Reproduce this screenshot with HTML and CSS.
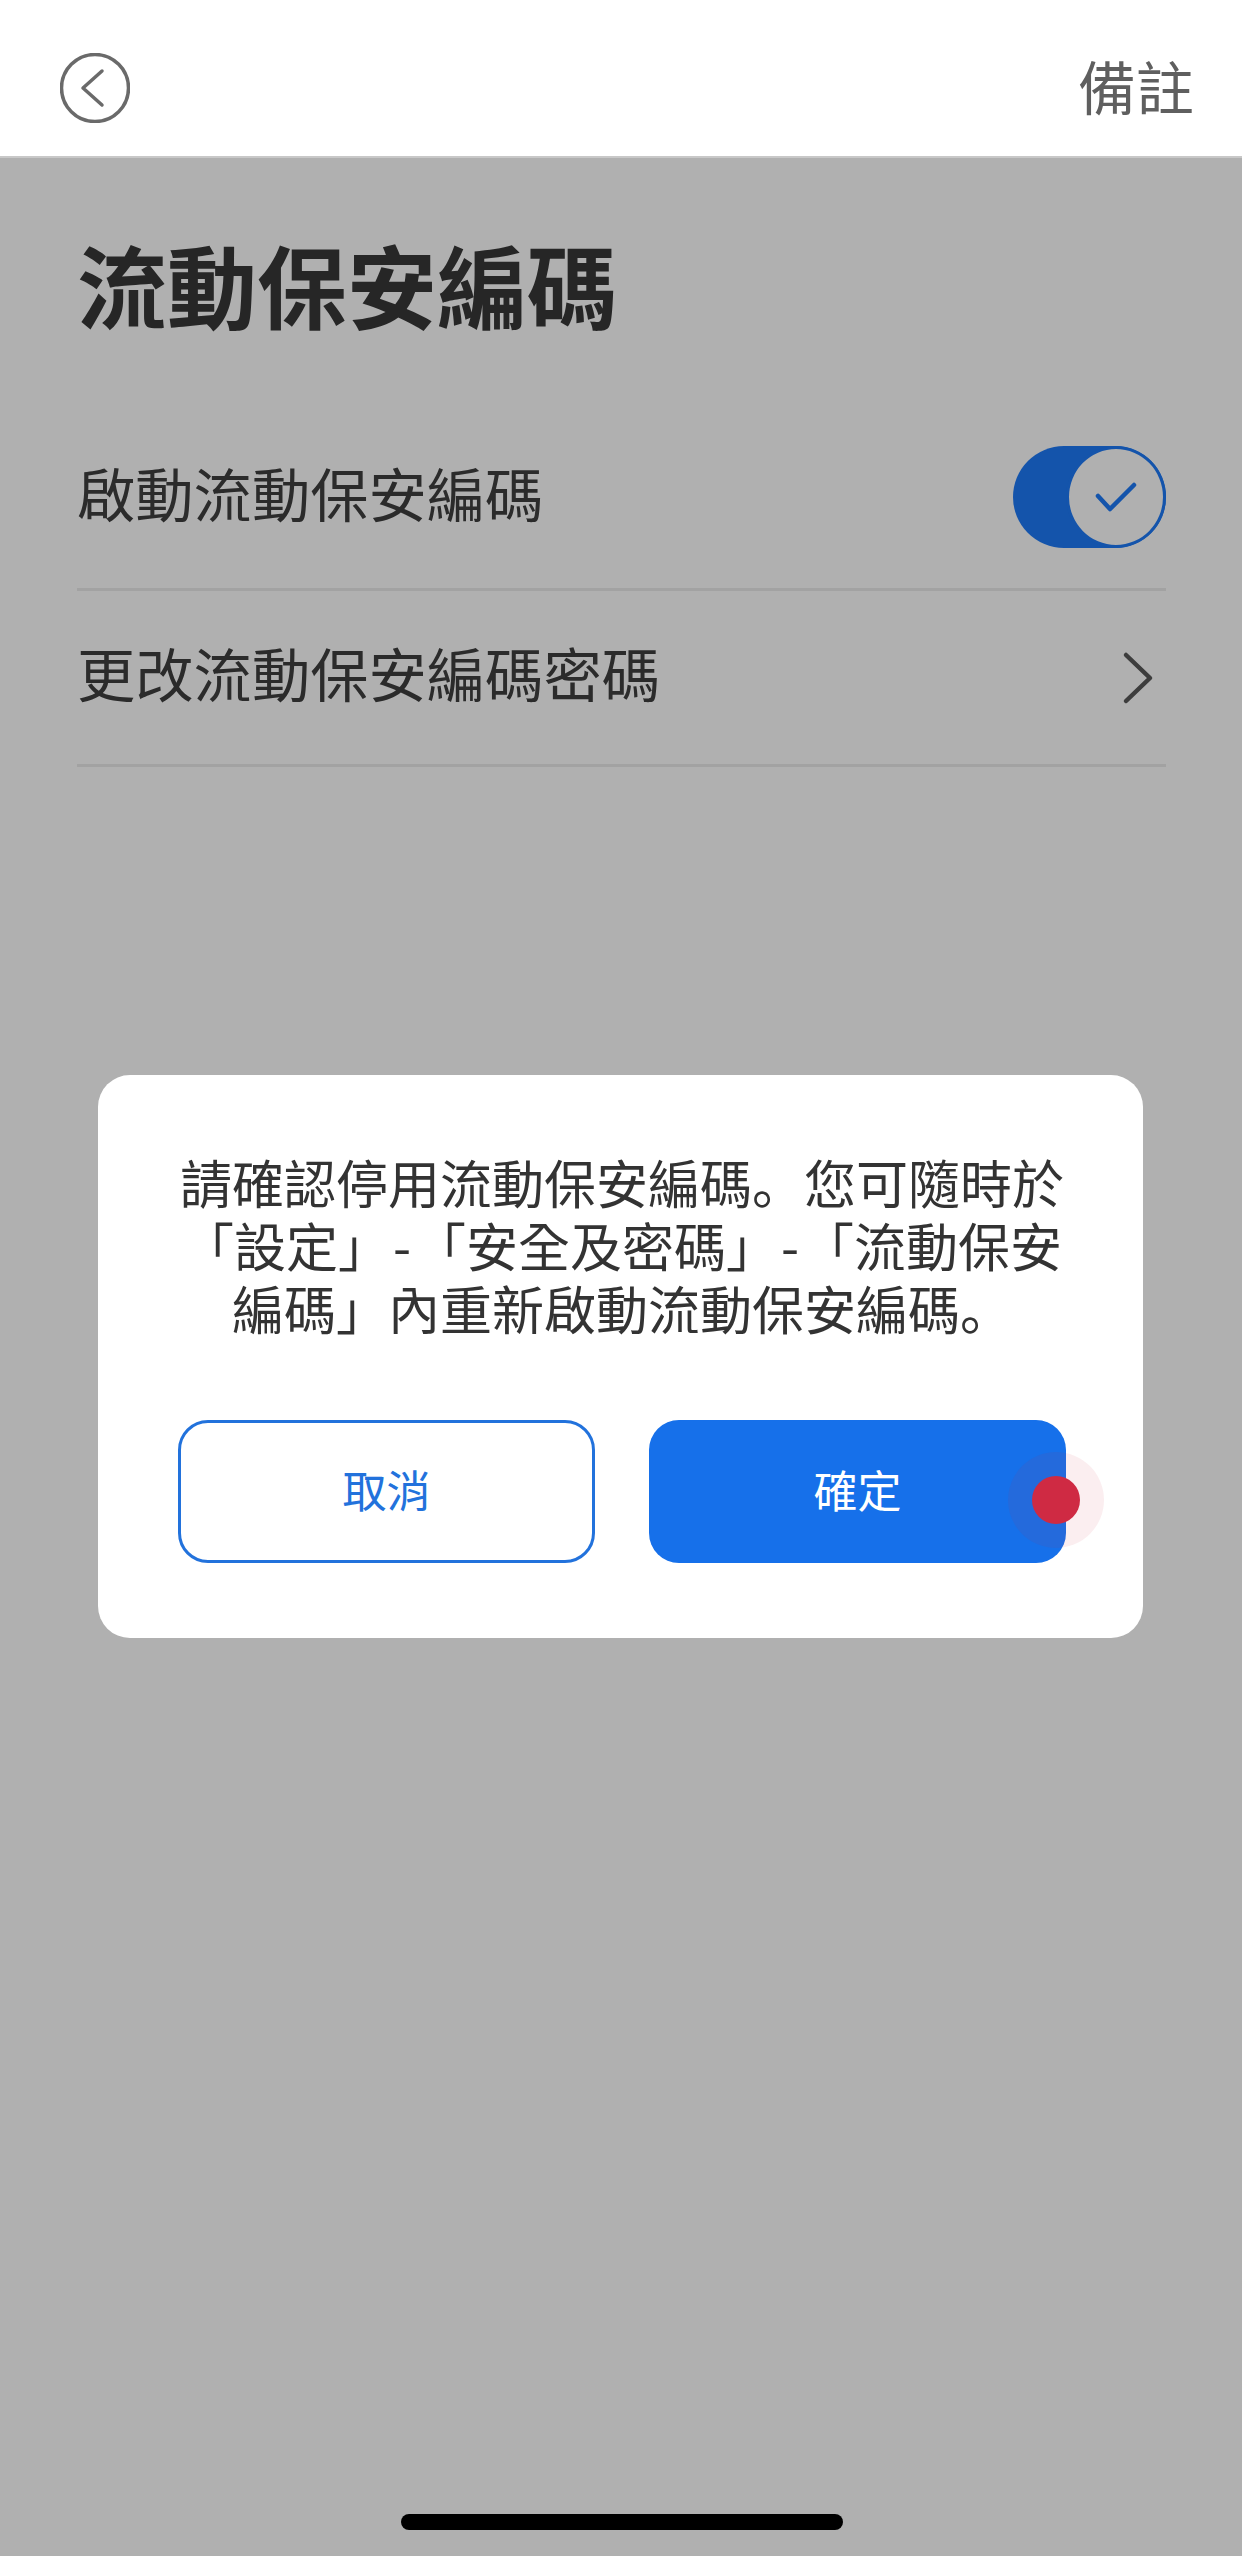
FILE: index.html
```html
<!DOCTYPE html>
<html lang="zh-Hant">
<head>
    <meta charset="UTF-8">
    <meta name="viewport" content="width=device-width, initial-scale=1.0">
    <title>流動保安編碼</title>
    <link rel="stylesheet" href="styles.css">
</head>
<body>
    <header class="topbar">
        <svg class="back-icon" width="70" height="70" viewBox="0 0 70 70" fill="none">
            <circle cx="35" cy="35" r="33.5" stroke="#6a6a6a" stroke-width="3.5"/>
            <path d="M42 18 L23 35 L42 52" stroke="#6a6a6a" stroke-width="3.5" stroke-linecap="round" stroke-linejoin="round"/>
        </svg>
        <span class="topbar-action">備註</span>
    </header>

    <main class="page">
        <h1 class="title">流動保安編碼</h1>
        <div class="row row-first">
            <span class="row-text-raised">啟動流動保安編碼</span>
            <div class="toggle">
                <div class="toggle-knob">
                    <svg width="44" height="32" viewBox="0 0 44 32" fill="none">
                        <path d="M4 15 L16 28 L40 4" stroke="#1454ab" stroke-width="4.5" stroke-linecap="round" stroke-linejoin="round"/>
                    </svg>
                </div>
            </div>
        </div>
        <div class="row">
            <span class="row-text-raised">更改流動保安編碼密碼</span>
            <svg class="chevron" width="32" height="54" viewBox="0 0 32 54" fill="none">
                <path d="M4 4 L28 27 L4 50" stroke="#3d3d3d" stroke-width="4.5" stroke-linecap="round" stroke-linejoin="round"/>
            </svg>
        </div>

        <div class="dialog">
            <p class="dialog-text">請確認停用流動保安編碼<span class="period" lang="zh-Hans">。</span>您可隨時於<br>「設定」<span class="dash">-</span>「安全及密碼」<span class="dash">-</span>「流動保安<br>編碼」內重新啟動流動保安編碼<span class="period" lang="zh-Hans">。</span></p>
            <div class="dialog-buttons">
                <button class="btn btn-outline">取消</button>
                <button class="btn btn-solid">確定</button>
            </div>
        </div>

        <div class="touch-halo"><div class="touch-dot"></div></div>
        <div class="home-bar"></div>
    </main>
</body>
</html>
```

FILE: styles.css
```css
* {
    box-sizing: border-box;
}
body {
    margin: 0;
    width: 1242px;
    height: 2556px;
    display: flex;
    flex-direction: column;
    overflow: hidden;
    font-family: "Noto Sans CJK TC", "Noto Sans", sans-serif;
    color: #2b2b2b;
    background-color: #b0b0b0;
}
.topbar {
    height: 158px;
    flex: none;
    display: flex;
    align-items: center;
    justify-content: space-between;
    padding: 36px 48px 16px 60px;
    background-color: #fff;
    border-bottom: 2px solid #c8c8c8;
}
.topbar-action {
    margin-bottom: 6px;
    font-size: 58px;
    line-height: 70px;
    color: #5f5f5f;
}
.page {
    position: relative;
    flex: 1;
    padding: 62px 76px 0 77px;
}
.title {
    margin: 0 0 60px;
    font-size: 90px;
    line-height: 126px;
    font-weight: 700;
    color: #262626;
}
.row {
    height: 176px;
    display: flex;
    align-items: center;
    justify-content: space-between;
    font-size: 58.3px;
    border-bottom: 3px solid #a2a2a2;
}
.row-first {
    height: 185px;
}
.row-text-raised {
    margin-bottom: 12px;
}
.toggle {
    width: 153px;
    height: 102px;
    display: flex;
    justify-content: flex-end;
    border-radius: 51px;
    background-color: #1454ab;
}
.toggle-knob {
    width: 100px;
    height: 102px;
    display: flex;
    align-items: center;
    justify-content: center;
    border: 3px solid #1454ab;
    border-radius: 50%;
    background-color: #b0b0b0;
}
.chevron {
    margin-right: 12px;
}
.dialog {
    position: absolute;
    top: 917px;
    left: 98px;
    width: 1045px;
    height: 563px;
    padding: 75px 77px 0 80px;
    border-radius: 32px;
    background-color: #fff;
}
.dialog-text {
    margin: 0;
    font-size: 52px;
    line-height: 63px;
    text-align: center;
    color: #333;
    white-space: nowrap;
}
.period {
    display: inline-block;
    font-family: "Noto Sans CJK SC", sans-serif;
}
.dash {
    display: inline-block;
    margin: 0 3px;
}
.dialog-buttons {
    display: flex;
    justify-content: space-between;
    margin-top: 81px;
}
.btn {
    width: 417px;
    height: 143px;
    font-family: inherit;
    font-size: 44px;
    border-radius: 30px;
    padding: 0 0 6px;
}
.btn-outline {
    color: #2272dc;
    background-color: #fff;
    border: 3px solid #2272dc;
}
.btn-solid {
    color: #fff;
    background-color: #1670ea;
    border: none;
}
.touch-halo {
    position: absolute;
    top: 1294px;
    left: 1008px;
    width: 96px;
    height: 96px;
    display: flex;
    align-items: center;
    justify-content: center;
    border-radius: 50%;
    background-color: rgba(207, 42, 67, 0.08);
}
.touch-dot {
    width: 48px;
    height: 48px;
    border-radius: 50%;
    background-color: #cf2a43;
}
.home-bar {
    position: absolute;
    left: 401px;
    bottom: 26px;
    width: 442px;
    height: 16px;
    border-radius: 8px;
    background-color: #000;
}
```
